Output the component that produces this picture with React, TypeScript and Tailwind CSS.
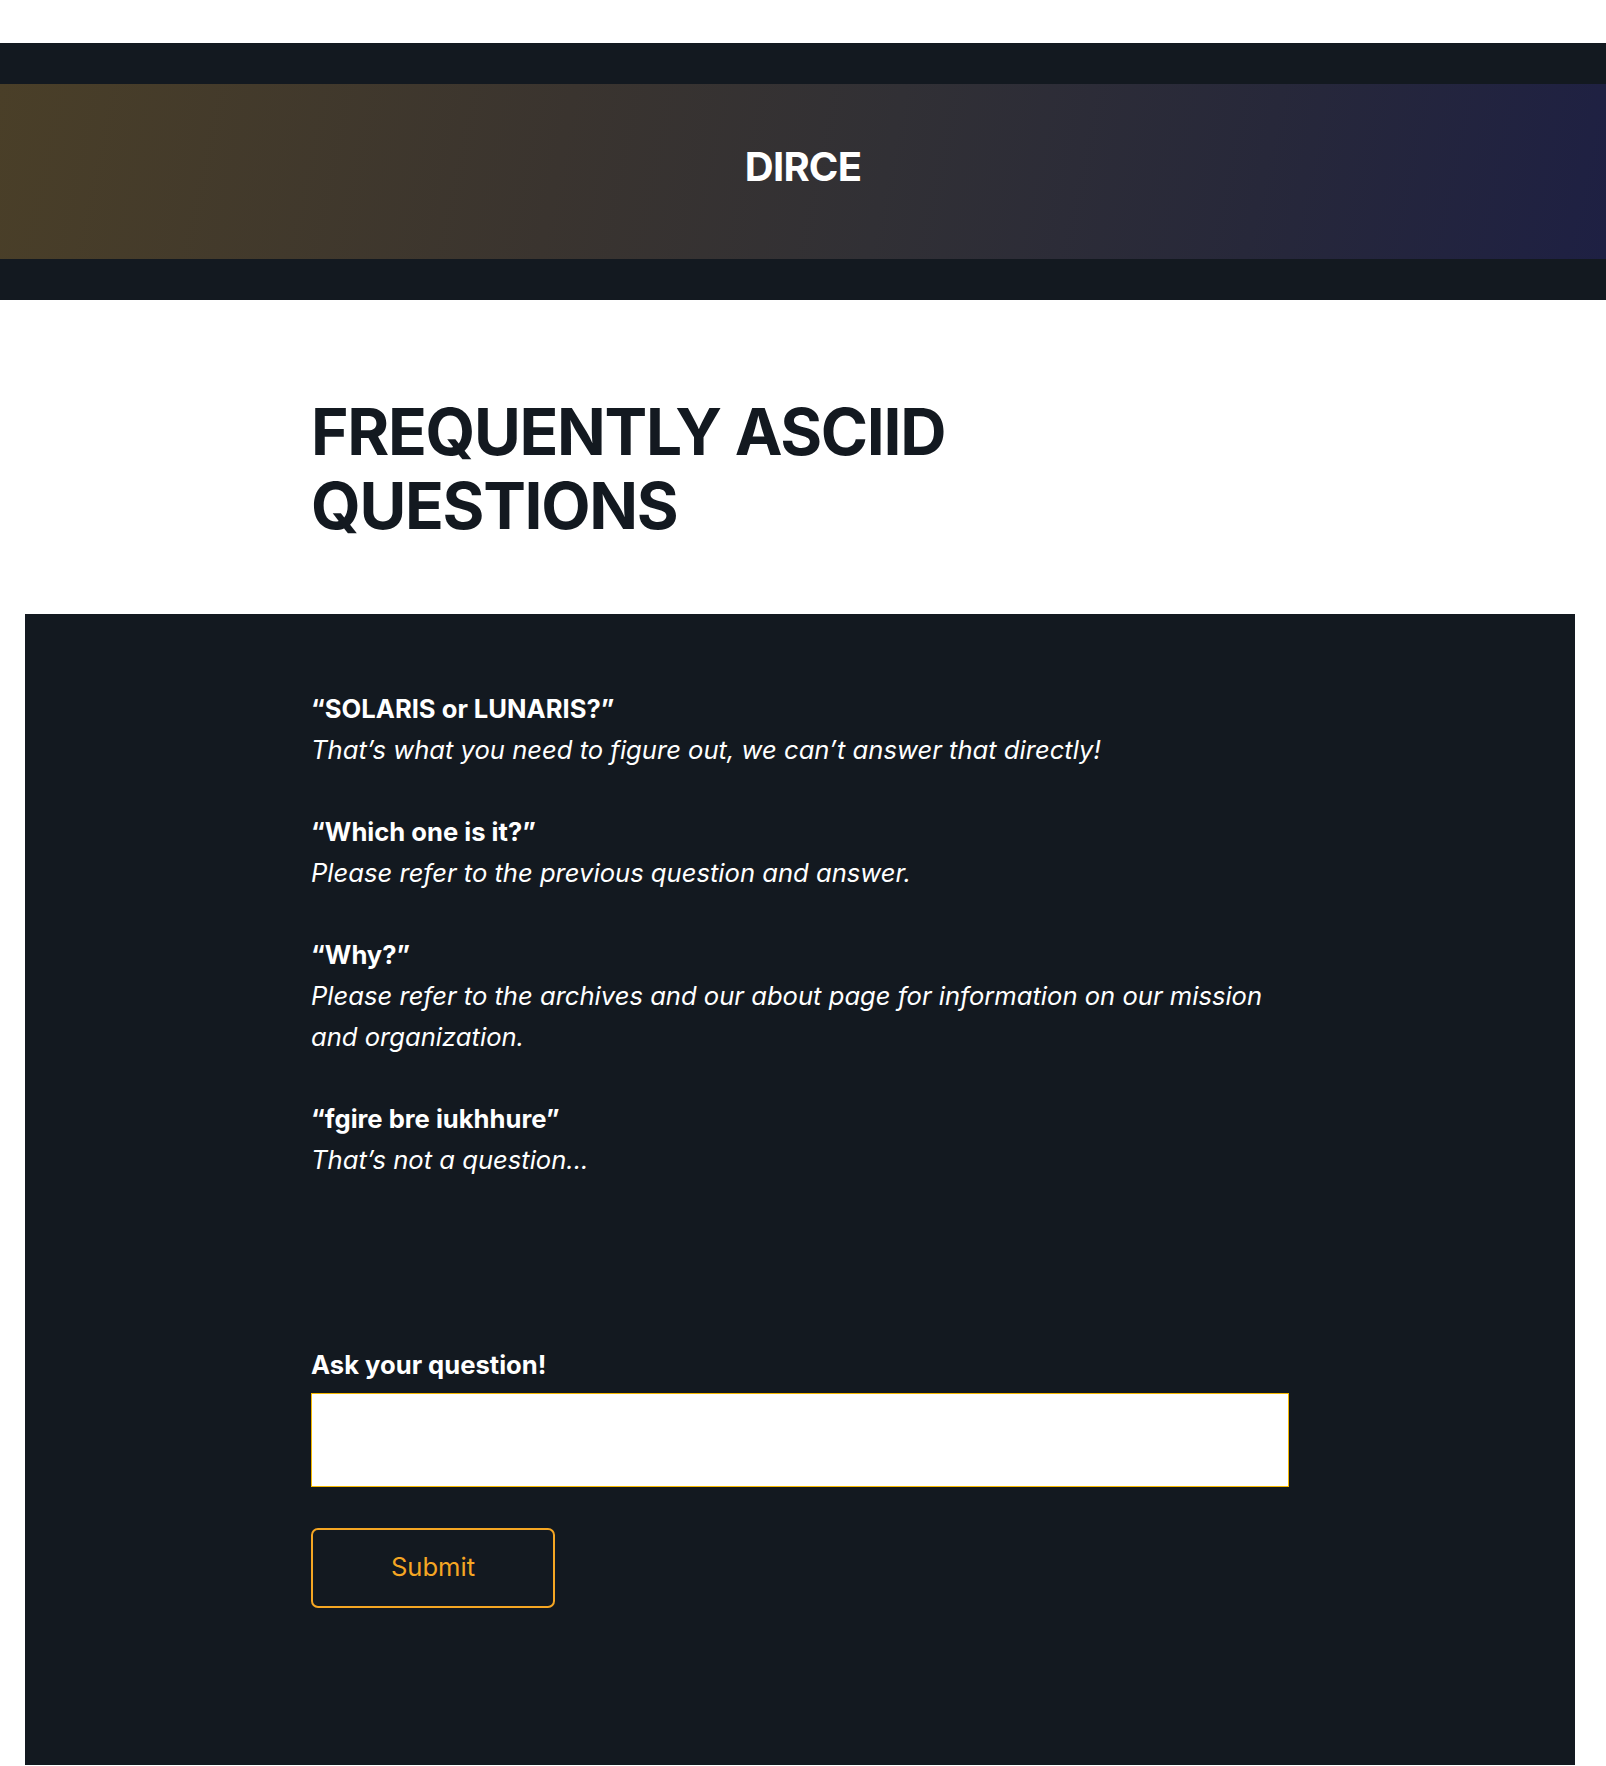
const faqs = [
  {
    question: "“SOLARIS or LUNARIS?”",
    answer: "That’s what you need to figure out, we can’t answer that directly!",
  },
  {
    question: "“Which one is it?”",
    answer: "Please refer to the previous question and answer.",
  },
  {
    question: "“Why?”",
    answer: "Please refer to the archives and our about page for information on our mission and organization.",
  },
  {
    question: "“fgire bre iukhhure”",
    answer: "That’s not a question...",
  },
]

function Header() {
  return (
    <header className="mt-[43px] bg-[#131920] py-[41px]">
      <div className="flex h-[175px] items-center justify-center bg-[linear-gradient(102deg,#4a3f28_0%,#3a342f_35%,#313035_55%,#27283a_78%,#1e2043_100%)] pb-[9px]">
        <h1 className="text-[40px] font-bold leading-none tracking-[-0.8px] text-white">DIRCE</h1>
      </div>
    </header>
  )
}

export default function App() {
  return (
    <div className="min-h-screen bg-white font-['Inter','Liberation_Sans',sans-serif]">
      <Header />

      <div className="w-[1550px] ml-[25px]">
        {/* Page title */}
        <div className="mx-auto w-[978px] pt-[95px] pb-[72px]">
          <h2 className="text-[64px] font-bold leading-[1.15] tracking-[-1.3px] text-[#131920]">
            FREQUENTLY ASCIID
            <br />
            QUESTIONS
          </h2>
        </div>

        {/* FAQ panel */}
        <section className="bg-[#131920] pt-[75px] pb-[157px]">
          <div className="mx-auto w-[978px] text-[25.6px] leading-[1.6] text-white">
            <div className="flex flex-col gap-[41px]">
              {faqs.map((faq) => (
                <div key={faq.question}>
                  <p className="font-bold">{faq.question}</p>
                  <p className="italic">{faq.answer}</p>
                </div>
              ))}
            </div>

            <form className="mt-[164px]" onSubmit={(e) => e.preventDefault()}>
              <label htmlFor="question" className="block font-bold">
                Ask your question!
              </label>
              <input
                id="question"
                type="text"
                className="mt-[7px] block h-[94px] w-full border border-[#f5b800] bg-white px-4 text-[20px] text-[#131920] outline-none"
              />
              <button
                type="submit"
                className="mt-[41px] flex h-[80px] w-[244px] items-center justify-center rounded-[7px] border-[2.5px] border-[#f5a623] text-[25.6px] text-[#f5a623]"
              >
                Submit
              </button>
            </form>
          </div>
        </section>
      </div>
    </div>
  )
}
